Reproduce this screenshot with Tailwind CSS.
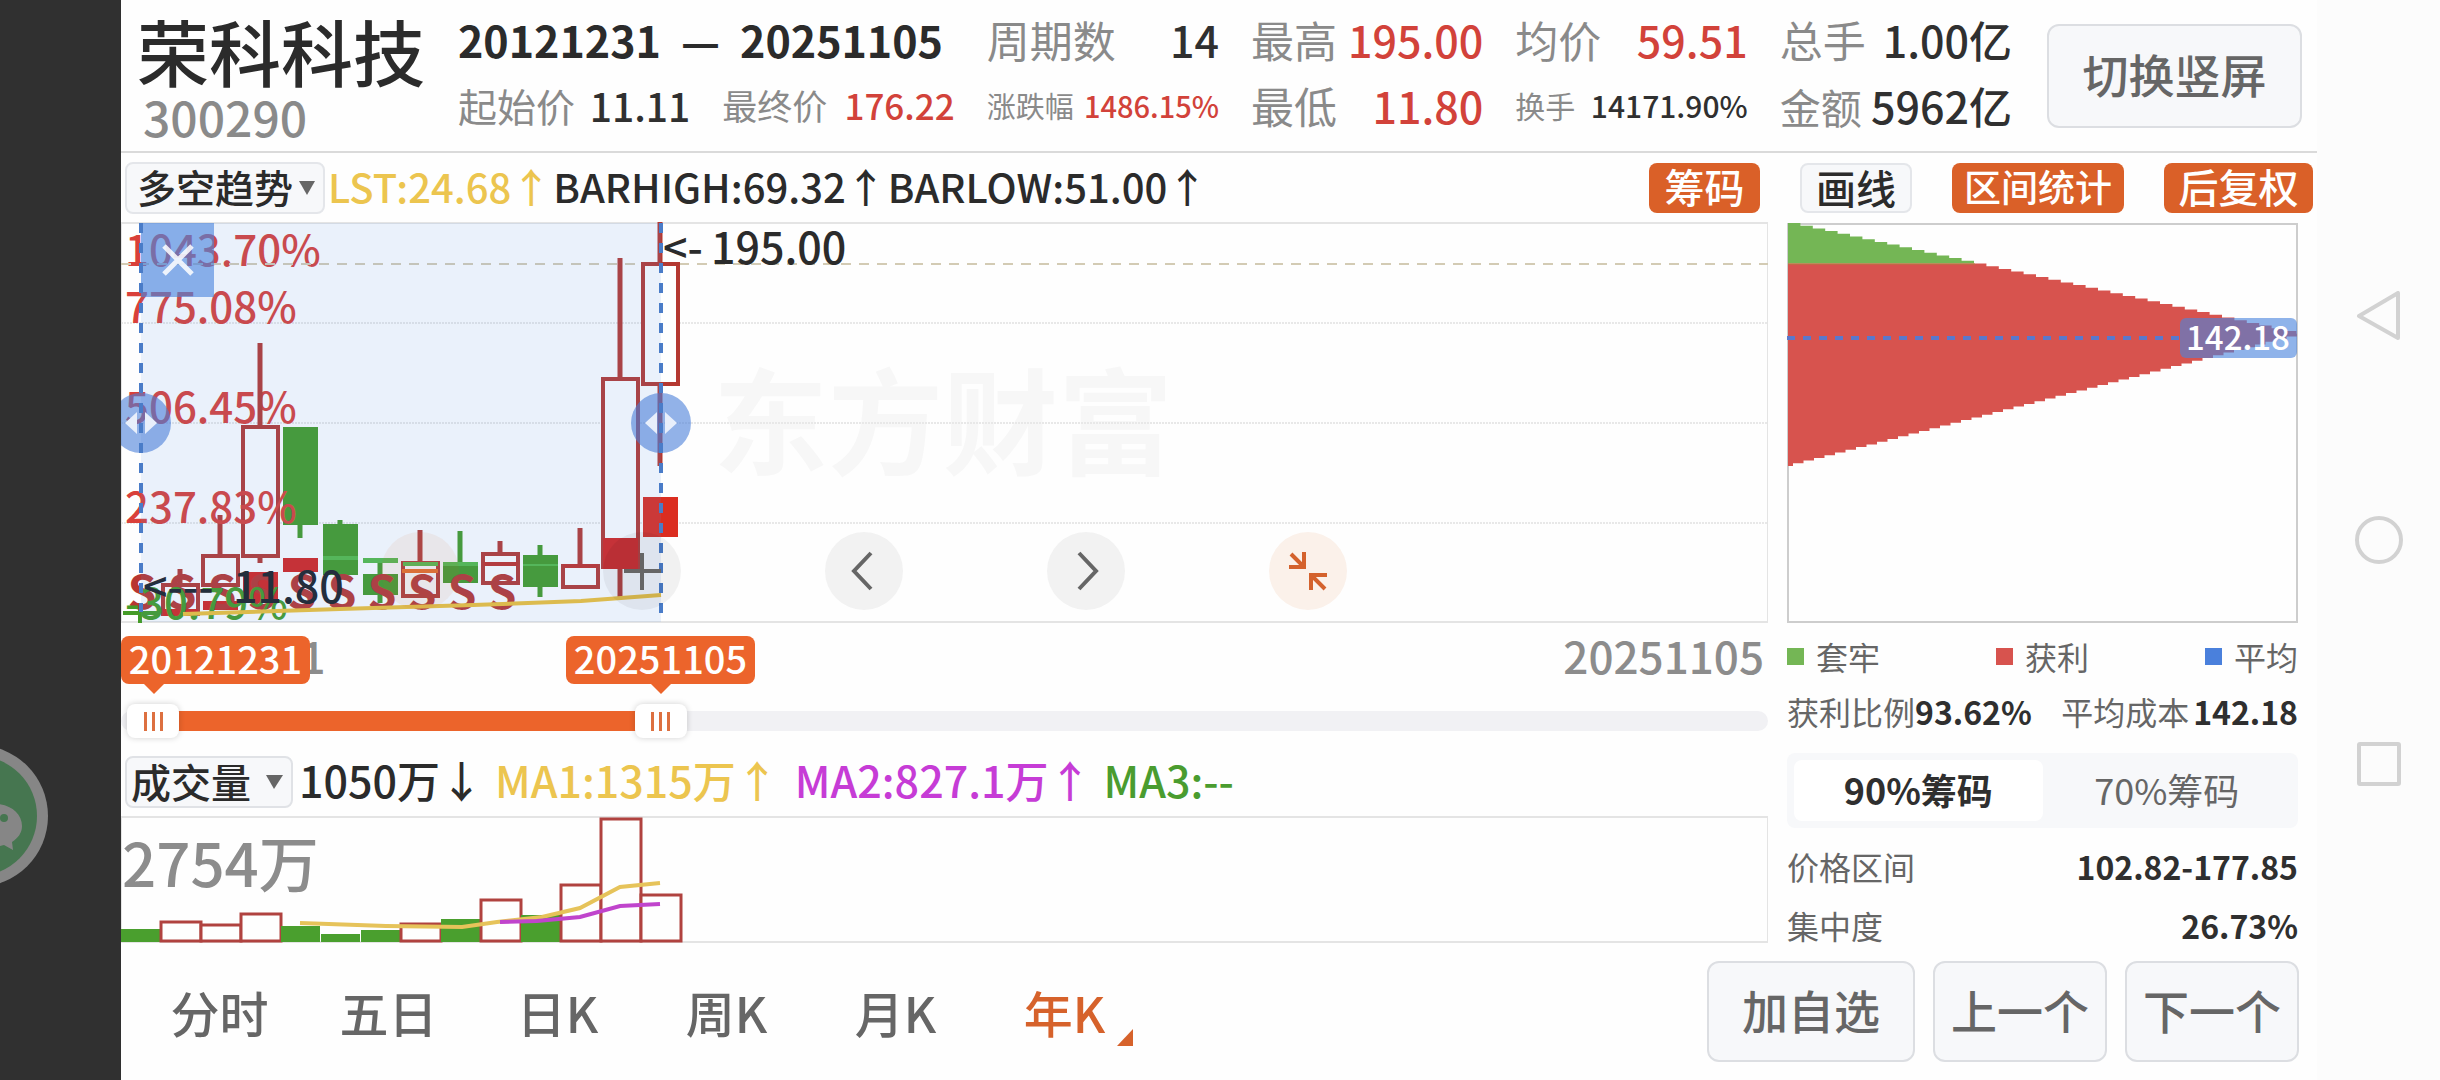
<!DOCTYPE html>
<html lang="zh-CN">
<head>
<meta charset="utf-8">
<meta name="viewport" content="width=device-width, initial-scale=1">
<title>荣科科技 300290</title>
<script src="https://cdn.jsdelivr.net/npm/@tailwindcss/browser@4"></script>
</head>
<body class="flex min-h-screen overflow-x-hidden bg-[#fefefe] font-['Noto_Sans_CJK_SC',sans-serif] font-medium text-[#2b2b2b]">

<!-- cutout strip with floating chat bubble -->
<aside class="relative w-[121px] shrink-0 overflow-hidden bg-[#303030]">
  <svg class="absolute left-0 top-[740px]" width="60" height="152" aria-label="微信">
    <circle cx="-23" cy="76" r="71" fill="#868686"/>
    <circle cx="-23" cy="76" r="60" fill="#467650"/>
    <path d="M-10 64C8 62 22 72 22 86C22 93 18 98 12 102L13 110L4 105C-2 107-8 107-14 105Z" fill="#868686"/>
    <circle cx="4" cy="78" r="4" fill="#467650"/>
  </svg>
</aside>

<main class="flex min-w-0 flex-1 flex-col">
  <header class="flex h-[153px] items-center border-b-2 border-[#dadada] pl-4 pr-[15px]">
    <div class="mr-[33px] w-[288px] shrink-0 pb-1">
      <h1 class="whitespace-nowrap text-[72px] leading-[84px]">荣科科技</h1>
      <p class="pl-1.5 text-[48px] leading-[48px] text-[#8a8a8a]">300290</p>
    </div>
    <div class="mr-[35px] grid flex-1 grid-cols-6 gap-x-8 whitespace-nowrap pb-2 text-[43px] text-[#8a8a8a] [&>p]:flex [&>p]:h-[66px] [&>p]:items-baseline [&>p]:justify-between [&>p]:leading-[66px] [&_b]:font-medium [&_b]:text-[#303030] [&_em]:not-italic [&_em]:text-[#d2423a]">
      <p class="col-span-2 font-bold text-[#2b2b2b]"><span class="flex gap-5"><time>20121231</time><span>—</span><time>20251105</time></span></p>
      <p><span class="font-normal">周期数</span><b>14</b></p>
      <p><span class="font-normal">最高</span><em>195.00</em></p>
      <p><span class="font-normal">均价</span><em>59.51</em></p>
      <p><span class="font-normal">总手</span><b>1.00亿</b></p>
      <p class="text-[39px]"><span class="font-normal">起始价</span><b>11.11</b></p>
      <p class="text-[35px]"><span class="font-normal">最终价</span><em>176.22</em></p>
      <p class="text-[29px]"><span class="font-normal">涨跌幅</span><em>1486.15%</em></p>
      <p><span class="font-normal">最低</span><em>11.80</em></p>
      <p class="text-[30px]"><span class="font-normal">换手</span><b>14171.90%</b></p>
      <p><span class="text-[41px] font-normal">金额</span><b>5962亿</b></p>
    </div>
    <button class="h-[104px] w-[255px] shrink-0 rounded-xl border-2 border-[#dcdee2] bg-[#f7f8fa] pb-1 text-[46px] text-[#666]">切换竖屏</button>
  </header>

  <!-- main indicator bar -->
  <div class="flex h-[69px] items-center whitespace-nowrap pl-1 pr-1 text-[40px] [&>span]:pb-1">
    <div class="relative mr-[3px]">
      <select aria-label="主图指标" class="block h-[52px] w-[200px] appearance-none rounded-lg border-2 border-[#e4e6ea] bg-[#f7f8fa] pb-1 pl-2.5 text-[39px] leading-[44px]"><option>多空趋势</option></select>
      <svg class="pointer-events-none absolute right-[10px] top-[19px]" width="16" height="14"><path d="M0 0H16L8 14Z" fill="#666"/></svg>
    </div>
    <span class="mr-0.5 text-[#ecc54f]">LST:24.68↑</span>
    <span class="mr-0.5">BARHIGH:69.32↑</span>
    <span>BARLOW:51.00↑</span>
    <div class="ml-auto flex gap-10 [&>button]:h-[50px] [&>button]:rounded-lg [&>button]:pb-1 [&>button]:leading-[44px]">
      <button class="w-[111px] bg-[#da6028] text-white">筹码</button>
      <button class="w-[112px] border-2 border-[#e4e6ea] bg-[#f7f8fa]">画线</button>
      <button class="w-[172px] bg-[#da6028] text-[37px] text-white">区间统计</button>
      <button class="w-[149px] bg-[#da6028] text-white">后复权</button>
    </div>
  </div>

  <div class="flex gap-[19px] pr-[19px]">
    <section class="min-w-0 flex-1">
      <!-- candlestick chart -->
      <div class="relative h-[401px]">
        <svg class="block h-full w-full overflow-hidden" id="kline">
          <text x="592" y="244" font-size="115" font-weight="700" fill="#f7f7f7">东方财富</text>
          <g stroke="#e8e8e8" stroke-width="2" stroke-dasharray="2 1">
            <line x1="0" x2="100%" y1="101" y2="101"/><line x1="0" x2="100%" y1="201" y2="201"/><line x1="0" x2="100%" y1="301" y2="301"/>
          </g>
          <g stroke="#e4e4e4" stroke-width="2">
            <line x1="0" x2="100%" y1="1" y2="1"/><line x1="0" x2="100%" y1="400" y2="400"/>
            <line x1="100%" x2="100%" y1="0" y2="401"/><line x1="0" x2="0" y1="0" y2="401"/>
          </g>
          <g fill="#d9403a" font-size="42">
            <text x="4" y="44">1043.70%</text><text x="4" y="101">775.08%</text><text x="4" y="201">506.45%</text>
          </g>
          <line x1="0" x2="100%" y1="42" y2="42" stroke="#d3cbb4" stroke-width="2" stroke-dasharray="10 8"/>
          <g id="candles"></g>
          <text x="4" y="301" font-size="42" fill="#d9403a">237.83%</text>
          <g id="signals" fill="#b83630" font-size="46" font-weight="700" text-anchor="middle"></g>
          <text x="4" y="397" font-size="42" fill="#449b27">-30.79%</text>
          <text x="22" y="381" font-size="43" fill="#1c2026">&lt;---<tspan x="112">11.80</tspan></text>
          <text x="542" y="42" font-size="43" fill="#2b2b2b">&lt;-<tspan x="590">195.00</tspan></text>
          <rect x="20" y="1" width="520" height="399" fill="#5891e6" fill-opacity=".12"/>
          <polyline points="62,392 219,387 352,383 460,379 540,373" fill="none" stroke="#dcbb4e" stroke-width="4"/>
          <rect x="20" y="1" width="73" height="74" fill="#4a84dd" fill-opacity=".62"/>
          <path d="M43 24L71 52M71 24L43 52" stroke="#fff" stroke-opacity=".85" stroke-width="5"/>
          <g fill="#4a7fd9" fill-opacity=".6"><circle cx="20" cy="201" r="30"/><circle cx="540" cy="201" r="30"/></g>
          <g stroke="#4a7cc8" stroke-width="4" stroke-dasharray="10 10"><path d="M20 1V390M540 1V400"/></g>
          <path d="M4 201L16 190V212ZM36 201L24 190V212ZM524 201L536 190V212ZM556 201L544 190V212Z" fill="#e8effb"/>
        </svg>
        <div class="absolute bottom-[13px] left-[260px] flex gap-36 [&>button]:size-[78px] [&>button]:rounded-full">
          <button aria-label="缩小" class="bg-[#da6028]/8"><svg viewBox="0 0 78 78" fill="none" stroke="#da7038" stroke-width="4"><path d="M21 39H57"/></svg></button>
          <button aria-label="放大" class="bg-black/5"><svg viewBox="0 0 78 78" fill="none" stroke="#666" stroke-width="4"><path d="M21 39H58M39 21V58"/></svg></button>
          <button aria-label="左移" class="bg-[#f2f2f2]"><svg viewBox="0 0 78 78" fill="none" stroke="#666" stroke-width="4"><path d="M46 21L29 39L46 57"/></svg></button>
          <button aria-label="右移" class="bg-[#f2f2f2]"><svg viewBox="0 0 78 78" fill="none" stroke="#666" stroke-width="4"><path d="M32 21L49 39L32 57"/></svg></button>
          <button aria-label="收起" class="bg-[#fbf1ea]"><svg viewBox="0 0 78 78" fill="none" stroke="#d4622d" stroke-width="4"><path d="M35 20V35H20M22 22L35 35M42 58V43H58M42 43L56 57"/></svg></button>
        </div>
      </div>

      <!-- date range -->
      <div class="relative flex h-[81px] justify-between px-1 text-[44px] leading-[64px] text-[#8c8c8c]">
        <time>20121231</time><time>20251105</time>
        <output class="absolute left-0 top-[13px] h-12 w-[189px] rounded-lg bg-[#ec642b] text-center text-[38px] leading-[44px] text-white">20121231<svg class="absolute left-[23px] top-12" width="20" height="10"><path d="M0 0H20L10 10Z" fill="#ec642b"/></svg></output>
        <output class="absolute left-[445px] top-[13px] h-12 w-[189px] rounded-lg bg-[#ec642b] text-center text-[38px] leading-[44px] text-white">20251105<svg class="absolute left-[85px] top-12" width="20" height="10"><path d="M0 0H20L10 10Z" fill="#ec642b"/></svg></output>
      </div>
      <div class="relative flex h-[34px] items-center">
        <div class="h-5 w-full overflow-hidden rounded-full bg-[#f1f1f4]"><div class="h-full bg-[#ec642b]" style="margin-left:2%;width:31%"></div></div>
        <input type="range" aria-label="开始日期" min="0" max="1000" value="4" class="pointer-events-none absolute inset-0 h-[34px] w-full appearance-none bg-transparent [&::-webkit-slider-thumb]:pointer-events-auto [&::-webkit-slider-thumb]:h-[34px] [&::-webkit-slider-thumb]:w-[52px] [&::-webkit-slider-thumb]:appearance-none [&::-webkit-slider-thumb]:rounded-lg [&::-webkit-slider-thumb]:bg-white [&::-webkit-slider-thumb]:bg-[linear-gradient(90deg,#dd7040_3px,transparent_3px,transparent_8px,#dd7040_8px,#dd7040_11px,transparent_11px,transparent_16px,#dd7040_16px)] [&::-webkit-slider-thumb]:bg-[length:19px_19px] [&::-webkit-slider-thumb]:bg-center [&::-webkit-slider-thumb]:bg-no-repeat [&::-webkit-slider-thumb]:shadow-[0_0_6px_rgba(0,0,0,0.18)]">
        <input type="range" aria-label="结束日期" min="0" max="1000" value="322" class="pointer-events-none absolute inset-0 h-[34px] w-full appearance-none bg-transparent [&::-webkit-slider-thumb]:pointer-events-auto [&::-webkit-slider-thumb]:h-[34px] [&::-webkit-slider-thumb]:w-[52px] [&::-webkit-slider-thumb]:appearance-none [&::-webkit-slider-thumb]:rounded-lg [&::-webkit-slider-thumb]:bg-white [&::-webkit-slider-thumb]:bg-[linear-gradient(90deg,#dd7040_3px,transparent_3px,transparent_8px,#dd7040_8px,#dd7040_11px,transparent_11px,transparent_16px,#dd7040_16px)] [&::-webkit-slider-thumb]:bg-[length:19px_19px] [&::-webkit-slider-thumb]:bg-center [&::-webkit-slider-thumb]:bg-no-repeat [&::-webkit-slider-thumb]:shadow-[0_0_6px_rgba(0,0,0,0.18)]">
      </div>

      <!-- volume -->
      <div class="flex h-[78px] items-center whitespace-nowrap pl-1 pt-2.5 text-[43px] leading-[52px] [&>span]:pb-1.5">
        <div class="relative mr-1.5">
          <select aria-label="副图指标" class="block h-[52px] w-[168px] appearance-none rounded-lg border-2 border-[#e0e2e6] bg-[#f7f8fa] pb-0.5 pl-1 text-[40px] leading-[46px]"><option>成交量</option></select>
          <svg class="pointer-events-none absolute right-[10px] top-[19px]" width="17" height="14"><path d="M0 0H17L8 14Z" fill="#666"/></svg>
        </div>
        <span class="mr-3">1050万↓</span>
        <span class="mr-4 text-[#ecc54f]">MA1:1315万↑</span>
        <span class="mr-3 text-[#c63cd6]">MA2:827.1万↑</span>
        <span class="text-[#4a9c2f]">MA3:--</span>
      </div>
      <svg class="block h-[127px] w-full overflow-hidden">
        <g stroke="#e4e4e4" stroke-width="2">
          <line x1="0" x2="100%" y1="1" y2="1"/><line x1="0" x2="100%" y1="126" y2="126"/>
          <line x1="100%" x2="100%" y1="0" y2="127"/><line x1="0" x2="0" y1="0" y2="127"/>
        </g>
        <text x="1" y="71" font-size="60" fill="#8c8c8c">2754万</text>
        <g id="volume"></g>
        <polyline points="179,107 265,110 341,111 376,106 421,101 459,92 499,71 539,67" fill="none" stroke="#e6c35a" stroke-width="4"/>
        <polyline points="379,106 416,105 459,101 499,90 539,88" fill="none" stroke="#c044cc" stroke-width="4"/>
      </svg>
    </section>

    <!-- chip distribution -->
    <section class="-mb-3 w-[511px] shrink-0 whitespace-nowrap text-[32px] font-normal text-[#666]">
      <svg class="mt-px block" width="511" height="400">
        <rect x="1" y="1" width="509" height="398" fill="none" stroke="#cdcdcd" stroke-width="2"/>
        <g id="chips"></g>
        <path d="M1 41H188" stroke="#b0803f" stroke-width="1"/>
        <path d="M0 115H394" stroke="#5a78cc" stroke-width="4" stroke-dasharray="8 8"/>
        <rect x="393" y="95" width="117" height="40" rx="6" fill="#4a84dd" fill-opacity=".62"/>
        <text x="451" y="127" text-anchor="middle" font-size="33" font-weight="500" fill="#fff">142.18</text>
      </svg>
      <ul class="flex h-[66px] items-center justify-between [&>li]:flex [&>li]:items-center [&>li]:gap-3">
        <li><i class="size-[17px] bg-[#74b655]"></i>套牢</li>
        <li><i class="size-[17px] bg-[#d7534e]"></i>获利</li>
        <li><i class="size-[17px] bg-[#4a80dc]"></i>平均</li>
      </ul>
      <div class="flex h-11 items-center justify-between [&_b]:text-[#2f2f2f]">
        <p class="flex items-center">获利比例<b>93.62%</b></p>
        <p class="flex items-center gap-1">平均成本<b>142.18</b></p>
      </div>
      <div class="mt-5 flex h-[75px] rounded-lg bg-[#f7f8fa] p-[7px] text-[36px] [&>button]:flex-1 [&>button]:rounded-lg [&>button]:pb-1">
        <button class="bg-white font-bold text-[#2f2f2f]">90%筹码</button>
        <button>70%筹码</button>
      </div>
      <dl class="pt-2 [&>div]:flex [&>div]:h-[59px] [&>div]:items-center [&>div]:justify-between [&_dd]:font-bold [&_dd]:text-[#2f2f2f]">
        <div><dt>价格区间</dt><dd>102.82-177.85</dd></div>
        <div><dt>集中度</dt><dd>26.73%</dd></div>
      </dl>
    </section>
  </div>

  <!-- period tabs and actions -->
  <footer class="flex min-h-[136px] flex-1 items-center whitespace-nowrap pl-3.5 pr-[18px] text-[#666]">
    <nav class="flex text-[49px] leading-[72px] [&>button]:w-[169px]">
      <button>分时</button><button>五日</button><button>日K</button><button>周K</button><button>月K</button>
      <button class="relative text-[#d6622b]">年K<svg class="absolute bottom-0.5 right-4" width="16" height="17"><path d="M16 0V17H0Z" fill="#d6622b"/></svg></button>
    </nav>
    <div class="ml-auto flex gap-[18px] text-[46px] [&>button]:h-[101px] [&>button]:rounded-xl [&>button]:border-2 [&>button]:border-[#dcdee2] [&>button]:bg-[#f7f8fa] [&>button]:pb-1">
      <button class="w-[208px]">加自选</button>
      <button class="w-[174px]">上一个</button>
      <button class="w-[174px]">下一个</button>
    </div>
  </footer>
</main>

<!-- system navigation -->
<nav class="flex w-[123px] shrink-0 flex-col items-center justify-center gap-[174px] bg-[#fcfcfc] [&>button]:size-[50px]">
  <button aria-label="返回"><svg viewBox="0 0 50 50" fill="none" stroke="#d2d2d2" stroke-width="4" stroke-linejoin="round"><path d="M44 2V47L5 25Z"/></svg></button>
  <button aria-label="主屏"><svg viewBox="0 0 50 50" fill="none" stroke="#d2d2d2" stroke-width="4"><circle cx="25" cy="25" r="22"/></svg></button>
  <button aria-label="多任务"><svg viewBox="0 0 50 50" fill="none" stroke="#d2d2d2" stroke-width="4" stroke-linejoin="round"><rect x="5" y="5" width="40" height="40" rx="1"/></svg></button>
</nav>

<script>
const RED = '#b43831', GREEN = '#449b27', LIGHT = '#55bb48', FILL = '#db2d20', DEEP = '#d42520';
// yearly candles: u = rising, top, bottom, high, low; marks: [top, bottom, colour]
const candles = [
  null,
  {u:1, t:361, b:394, h:347, l:394, m:[[387,394,DEEP]]},
  {u:1, t:332, b:365, h:293, l:365, m:[[379,388,DEEP]]},
  {u:1, t:203, b:336, h:121, l:341, m:[[350,381,DEEP]]},
  {u:0, t:205, b:303, h:205, l:316, m:[[336,350,DEEP]]},
  {u:0, t:302, b:353, h:298, l:353, m:[[334,338,LIGHT]]},
  {u:0, t:352, b:373, h:340, l:381, m:[[336,341,LIGHT]]},
  {u:1, t:339, b:376, h:308, l:376, m:[[340,344,LIGHT]]},
  {u:0, t:340, b:361, h:309, l:361, m:[[340,344,LIGHT]]},
  {u:1, t:330, b:363, h:319, l:363, m:[[340,344,'#c0302a']]},
  {u:0, t:333, b:365, h:323, l:375, m:[[342,344,LIGHT]]},
  {u:1, t:342, b:367, h:306, l:367, m:[[342,346,'#c0302a']]},
  {u:1, t:155, b:347, h:36, l:375, m:[[316,347,DEEP]]},
  {u:1, t:40, b:164, h:0, l:244, m:[[275,315,FILL]]}
];
let out = '<path d="M2 391H37M19 381V401" stroke="' + GREEN + '" stroke-width="4"/>';
candles.forEach((c, i) => {
  if (!c) return;
  const x = 19 + 40 * i, col = c.u ? RED : GREEN;
  out += `<path d="M${x} ${c.h}V${c.t}M${x} ${c.b}V${c.l}" stroke="${col}" stroke-width="5"/>`;
  out += c.u
    ? `<rect x="${x - 17}" y="${c.t + 2}" width="35" height="${c.b - c.t - 4}" fill="#fefefe" stroke="${col}" stroke-width="4"/>`
    : `<rect x="${x - 17}" y="${c.t}" width="35" height="${c.b - c.t}" fill="${col}"/>`;
  c.m.forEach(([a, b, f]) => out += `<rect x="${x - 17}" y="${a}" width="35" height="${b - a}" fill="${f}"/>`);
});
document.getElementById('candles').innerHTML = out;

out = '';
for (let i = 0; i < 10; i++) out += `<text x="${21 + 40 * i}" y="387">S</text>`;
document.getElementById('signals').innerHTML = out;

// volume bars: [rising, top]
out = '';
[[0,113],[1,104],[1,107],[1,96],[0,110],[0,118],[0,114],[1,106],[0,103],[1,82],[0,99],[1,67],[1,1],[1,77]].forEach(([u, t], i) => {
  out += u
    ? `<rect x="${40 * i}" y="${t + 2}" width="40" height="${123 - t}" fill="#fefefe" stroke="#b0423f" stroke-width="3"/>`
    : `<rect x="${40 * i}" y="${t}" width="39" height="${126 - t}" fill="#4a9f2e"/>`;
});
document.getElementById('volume').innerHTML = out;

// chip histogram: rows widen to the average cost, then narrow
const rows = 90, rh = 243 / rows;
const widths = Array.from({length: rows}, (_, i) => i < 41 ? 12.4 * (i + 1) : 509 - 10.5 * (i - 41));
const path = (a, b) => {
  let d = `M1 ${a * rh}`;
  for (let i = a; i < b; i++) d += `V${i * rh}H${Math.max(3, 1 + widths[i])}V${(i + 1) * rh}`;
  return d + 'H1Z';
};
document.getElementById('chips').innerHTML =
  `<path d="${path(0, 15)}" fill="#74b655"/><path d="${path(15, rows)}" fill="#d7534e"/>`;
</script>
</body>
</html>
